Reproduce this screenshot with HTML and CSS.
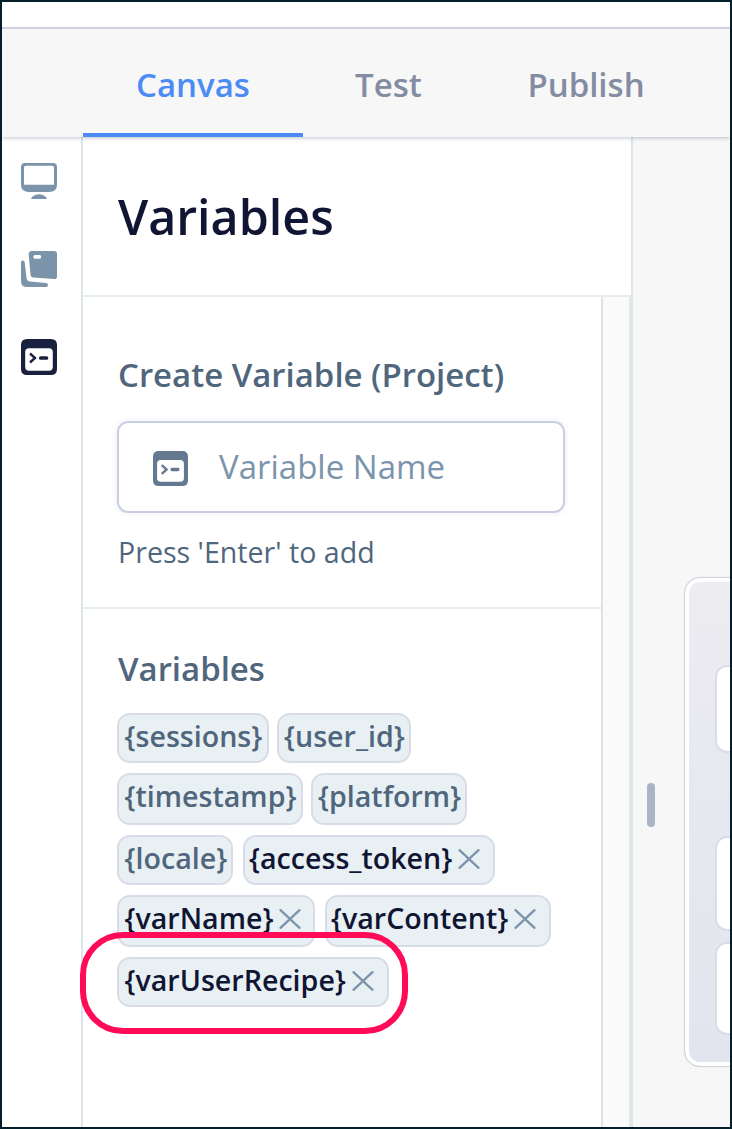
FILE: index.html
```html
<!DOCTYPE html>
<html lang="en">
<head>
<meta charset="utf-8">
<title>Variables</title>
<link rel="stylesheet" href="styles.css">
</head>
<body>
<svg class="defs" width="0" height="0" aria-hidden="true">
  <symbol id="code" viewBox="0 0 36 36">
    <path fill="currentColor" fill-rule="evenodd" d="M6 0H30Q36 0 36 6V30Q36 36 30 36H6Q0 36 0 30V6Q0 0 6 0ZM8 9.3Q4.200 9.300 4.200 13V28Q4.200 31.700 8 31.700H28Q31.800 31.700 31.800 28V13Q31.800 9.300 28 9.300Z"/>
    <path fill="none" stroke="currentColor" stroke-width="2.400" d="M9 14.500L14 19L9 23.500"/>
    <rect x="18" y="17.200" width="9.200" height="3.600" rx="1.500" fill="currentColor"/>
  </symbol>
  <symbol id="close" viewBox="0 0 22 20">
    <path fill="none" stroke="currentColor" stroke-width="2.300" stroke-linecap="round" d="M1.500 1.200L20.500 18.800M20.500 1.200L1.500 18.800"/>
  </symbol>
</svg>
<div class="window">
  <div class="topbar"></div>
  <nav class="tabs">
    <a class="tab active"><span>Canvas</span></a>
    <a class="tab test"><span>Test</span></a>
    <a class="tab publish"><span>Publish</span></a>
  </nav>
  <div class="body">
    <aside class="rail">
      <svg width="36" height="36" viewBox="0 0 36 36"><path fill="currentColor" fill-rule="evenodd" d="M4 0H32Q36 0 36 4V22Q36 29 28 29H8Q0 29 0 22V4Q0 0 4 0ZM5 2.700Q3 2.700 3 4.700V21.700H33V4.700Q33 2.700 31 2.700Z"/><path fill="currentColor" d="M10 36Q10.500 33.500 14 32Q18 30.400 22 32Q25.500 33.500 26 36Z"/></svg>
      <svg width="36" height="36" viewBox="0 0 36 36"><path fill="currentColor" fill-rule="evenodd" d="M11 0H33Q36 0 36 3V25.500Q36 28.300 33 28.100L12.500 26.500Q9.700 26.300 9.500 23.500L7.700 3.500Q7.500 0 11 0ZM14 3.900Q12.300 3.900 12.300 5.800Q12.300 7.800 14 7.800H18.500Q20.300 7.800 20.300 5.800Q20.300 3.900 18.500 3.900Z"/><path fill="currentColor" d="M0 11Q0 9.500 1.800 9.500Q3.500 9.500 3.700 11.300L5.500 27Q5.900 30.200 9 30.500L25 32Q27 32.200 27 34Q27 36 25 36H6Q0 36 0 30Z"/></svg>
      <svg class="selected" width="36" height="36"><use href="#code"/></svg>
    </aside>
    <main class="panel">
      <header class="panel-head"><h1>Variables</h1></header>
      <div class="panel-body">
        <div class="content">
          <section class="create">
            <h2>Create Variable (Project)</h2>
            <div class="field"><svg width="35" height="35"><use href="#code"/></svg><span>Variable Name</span></div>
            <p class="hint">Press 'Enter' to add</p>
          </section>
          <section class="list">
            <h2 class="list-title">Variables</h2>
            <div class="row"><span class="chip w-sessions"><b>{sessions}</b></span><span class="chip w-user"><b>{user_id}</b></span></div>
            <div class="row tall"><span class="chip w-time"><b>{timestamp}</b></span><span class="chip w-platform"><b>{platform}</b></span></div>
            <div class="row wide"><span class="chip w-locale"><b>{locale}</b></span><span class="chip own w-token"><b>{access_token}</b><svg width="22" height="20"><use href="#close"/></svg></span></div>
            <div class="row tall wide"><span class="chip own w-name"><b>{varName}</b><svg width="22" height="20"><use href="#close"/></svg></span><span class="chip own w-content"><b>{varContent}</b><svg width="22" height="20"><use href="#close"/></svg></span></div>
            <div class="row marked"><span class="chip own w-recipe"><b>{varUserRecipe}</b><svg width="22" height="20"><use href="#close"/></svg></span></div>
          </section>
        </div>
        <div class="scroll"></div>
      </div>
    </main>
    <div class="canvas">
      <div class="handle"></div>
      <div class="block">
        <div class="step s1"></div>
        <div class="step s2"></div>
        <div class="step s3"></div>
      </div>
    </div>
  </div>
</div>
</body>
</html>
```
FILE: styles.css
```css
*, *::after { box-sizing: border-box; }
body { margin: 0; font-family: "Open Sans", "Noto Sans", sans-serif; }
.defs { position: absolute; }
.window { width: 732px; height: 1129px; border: 2px solid #03202a; background: #fff; display: flex; flex-direction: column; overflow: hidden; }
.topbar { height: 27px; flex: none; border-bottom: 2px solid #d8daea; }
.tabs { height: 108px; flex: none; background: #f7f7f7; display: flex; padding-left: 81px; box-shadow: 0 1px 4px rgba(80, 90, 120, .35); z-index: 1; }
.tab { height: 108px; padding-top: 32px; text-align: center; color: #848ca3; font-size: 33px; line-height: 48px; font-weight: 600; white-space: nowrap; }
.active { width: 220px; color: #4c8bf5; border-bottom: 4px solid #4c8bf5; }
.test { width: 171px; }
.publish { width: 224px; }
.body { flex: 1; display: flex; min-height: 0; }
.rail { width: 81px; flex: none; border-right: 2px solid #dce5e9; display: flex; flex-direction: column; gap: 52px; padding: 26px 0 0 19px; color: #7c94aa; }
.rail svg { display: block; }
.rail .selected { color: #19213f; }
.panel { width: 548px; flex: none; display: flex; flex-direction: column; }
.panel-head { height: 160px; border-bottom: 2px solid #e6ebf0; padding: 44px 0 0 35px; }
h1 { margin: 0; font-size: 48.4px; line-height: 70px; font-weight: 600; color: #101533; }
.panel-body { flex: 1; display: flex; }
.content { width: 518px; color: #4f667d; }
.create { height: 312px; border-bottom: 2px solid #e6ebf0; padding: 54px 35px 0 34px; }
h2 { margin: 0 0 0 1px; font-size: 32.95px; line-height: 48px; font-weight: 600; white-space: nowrap; }
.field { height: 92px; margin-top: 22px; width: 448px; border: 2px solid #c9cfe1; border-radius: 11px; box-shadow: 0 0 6px rgba(30, 40, 90, .08); display: flex; align-items: center; gap: 31px; padding-left: 34px; font-size: 33px; color: #7b94ab; }
.field span { margin-top: -2px; }
.field svg { color: #64798f; margin-top: 2px; }
.hint { margin: 19px 0 0 1px; font-size: 28.6px; line-height: 40px; white-space: nowrap; }
.list { padding: 36px 0 0 34px; }
.list-title { margin-bottom: 20px; }
.row { display: flex; gap: 8px; height: 50px; margin-bottom: 10px; }
.tall { height: 52px; }
.wide { gap: 10px; }
.chip { border: 2px solid #d8dce9; border-radius: 13px; background: #e9f0f4; font-size: 28.6px; line-height: 42px; padding-left: 5.500px; display: flex; white-space: nowrap; }
.chip b { font-weight: 600; }
.chip svg { margin: 12px 0 0 6px; color: #7b94ab; }
.own { color: #101533; }
.w-sessions { width: 152px; } .w-user { width: 134px; padding-left: 5px; }
.w-time { width: 186px; } .w-platform { width: 156px; padding-left: 5px; }
.w-locale { width: 116px; } .w-token { width: 252px; padding-left: 4px; }
.w-name { width: 198px; } .w-content { width: 226px; padding-left: 4px; }
.w-recipe { width: 272px; }
.marked { position: relative; }
/* Highlight ring drawn over the neighbouring chips */
.marked::after { content: ""; position: absolute; left: -37.500px; top: -25.500px; width: 328.500px; height: 102px; border: 6px solid #ff0b57; border-radius: 43px; }
.scroll { width: 30px; border-left: 2px solid #dfe1e3; border-right: 2px solid #e5e7e9; background: #fafafa; }
.canvas { flex: 1; border-left: 2px solid #dce5e9; background: #f7f7f7; display: flex; overflow: hidden; padding-left: 14px; }
.handle { width: 8px; height: 44px; flex: none; margin-top: 646px; border-radius: 4px; background: #a9b5c2; }
.block { width: 120px; height: 490px; flex: none; margin: 440px 0 0 29px; border: 1px solid #ccd3d9; border-radius: 16px; padding: 87px 0 0 30px; background: linear-gradient(#ececf1, #e2e5ee); box-shadow: inset 0 0 0 4px #fff, 0 0 1px #ccd3d9; }
.step { width: 80px; border: 2px solid #dadce8; border-radius: 12px; background: #fff; }
.s1 { height: 88px; }
.s2 { height: 95px; margin-top: 83px; }
.s3 { height: 93px; margin-top: 11px; }
```
